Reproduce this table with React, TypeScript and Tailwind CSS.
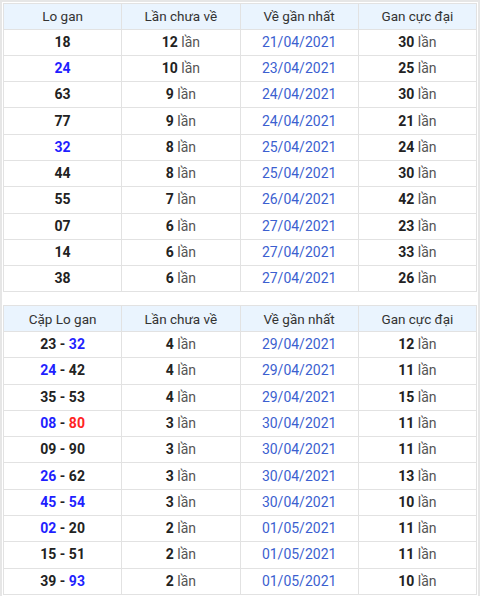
const gan = [
  { lo: '18', blue: false, miss: '12', last: '21/04/2021', max: '30' },
  { lo: '24', blue: true, miss: '10', last: '23/04/2021', max: '25' },
  { lo: '63', blue: false, miss: '9', last: '24/04/2021', max: '30' },
  { lo: '77', blue: false, miss: '9', last: '24/04/2021', max: '21' },
  { lo: '32', blue: true, miss: '8', last: '25/04/2021', max: '24' },
  { lo: '44', blue: false, miss: '8', last: '25/04/2021', max: '30' },
  { lo: '55', blue: false, miss: '7', last: '26/04/2021', max: '42' },
  { lo: '07', blue: false, miss: '6', last: '27/04/2021', max: '23' },
  { lo: '14', blue: false, miss: '6', last: '27/04/2021', max: '33' },
  { lo: '38', blue: false, miss: '6', last: '27/04/2021', max: '26' }
];

// colour per number: k = black, b = blue, r = red
const pairs = [
  { a: ['23', 'k'], b: ['32', 'b'], miss: '4', last: '29/04/2021', max: '12' },
  { a: ['24', 'b'], b: ['42', 'k'], miss: '4', last: '29/04/2021', max: '11' },
  { a: ['35', 'k'], b: ['53', 'k'], miss: '4', last: '29/04/2021', max: '15' },
  { a: ['08', 'b'], b: ['80', 'r'], miss: '3', last: '30/04/2021', max: '11' },
  { a: ['09', 'k'], b: ['90', 'k'], miss: '3', last: '30/04/2021', max: '11' },
  { a: ['26', 'b'], b: ['62', 'k'], miss: '3', last: '30/04/2021', max: '13' },
  { a: ['45', 'b'], b: ['54', 'b'], miss: '3', last: '30/04/2021', max: '10' },
  { a: ['02', 'b'], b: ['20', 'k'], miss: '2', last: '01/05/2021', max: '11' },
  { a: ['15', 'k'], b: ['51', 'k'], miss: '2', last: '01/05/2021', max: '11' },
  { a: ['39', 'k'], b: ['93', 'b'], miss: '2', last: '01/05/2021', max: '10' }
];

const tone: Record<string, string> = { k: 'text-[#222]', b: 'text-[#1f1fff]', r: 'text-[#ff2323]' };

const th = 'h-[25.5px] border border-[#e2e2e2] bg-[#eaf4fe] text-center text-[13.5px] font-normal text-[#333]';
const td = 'h-[26.3px] border border-[#e2e2e2] text-center text-[14px]';

function Times({ n }: { n: string }) {
  return (
    <>
      <b className="font-bold text-[#222]">{n}</b> <span className="text-[#555]">lần</span>
    </>
  );
}

function Head({ first }: { first: string }) {
  return (
    <thead>
      <tr>
        <th className={th}>{first}</th>
        <th className={th}>Lần chưa về</th>
        <th className={th}>Về gần nhất</th>
        <th className={th}>Gan cực đại</th>
      </tr>
    </thead>
  );
}

export default function App() {
  return (
    <div className="h-[596px] w-[480px] overflow-hidden bg-white font-['Roboto',sans-serif]">
      <div className="border-2 border-[#e6e6e6] p-[1px]">
        <table className="w-full table-fixed border-collapse">
          <Head first="Lo gan" />
          <tbody>
            {gan.map((r) => (
              <tr key={r.lo}>
                <td className={`${td} font-bold ${r.blue ? 'text-[#1f1fff]' : 'text-[#222]'}`}>{r.lo}</td>
                <td className={td}><Times n={r.miss} /></td>
                <td className={`${td} text-[#3c5fd0]`}>{r.last}</td>
                <td className={td}><Times n={r.max} /></td>
              </tr>
            ))}
          </tbody>
        </table>

        <table className="mt-[13px] w-full table-fixed border-collapse">
          <Head first="Cặp Lo gan" />
          <tbody>
            {pairs.map((r) => (
              <tr key={r.a[0] + r.b[0]}>
                <td className={`${td} font-bold text-[#222]`}>
                  <span className={tone[r.a[1]]}>{r.a[0]}</span> - <span className={tone[r.b[1]]}>{r.b[0]}</span>
                </td>
                <td className={td}><Times n={r.miss} /></td>
                <td className={`${td} text-[#3c5fd0]`}>{r.last}</td>
                <td className={td}><Times n={r.max} /></td>
              </tr>
            ))}
          </tbody>
        </table>
      </div>
    </div>
  );
}
